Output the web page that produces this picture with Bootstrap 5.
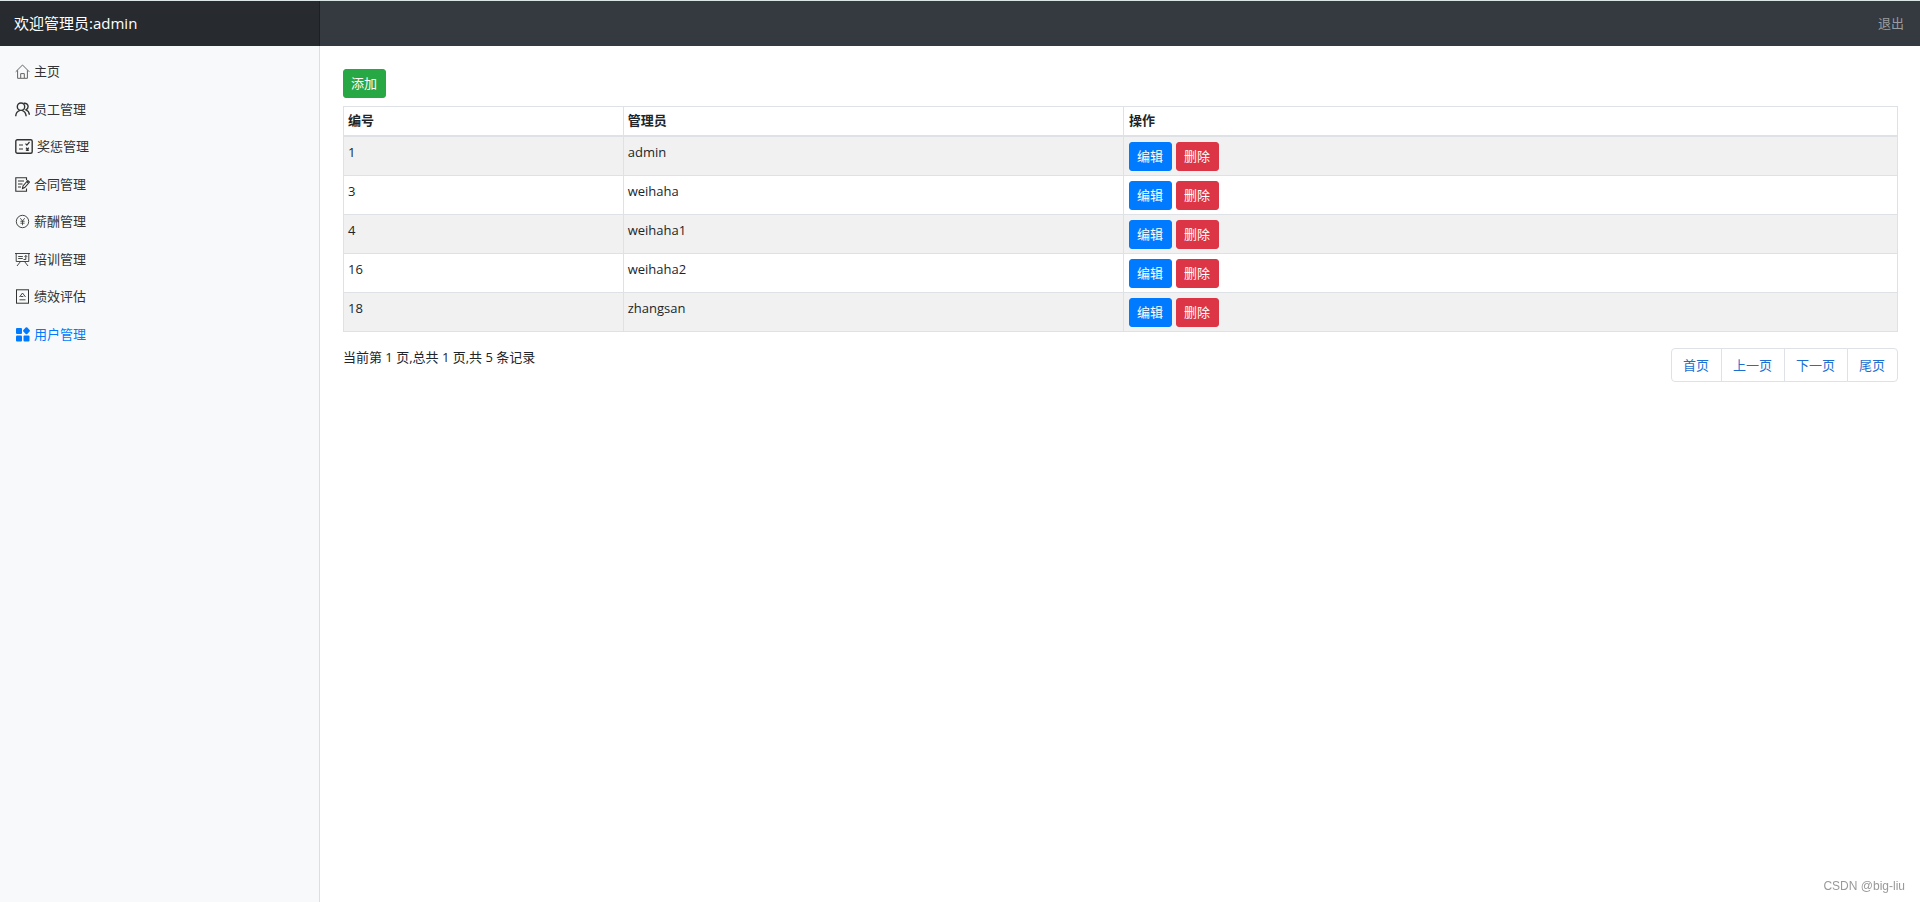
<!DOCTYPE html>
<html lang="zh-CN">
<head>
<meta charset="utf-8">
<meta name="viewport" content="width=device-width, initial-scale=1">
<title>用户管理</title>
<link href="https://cdn.jsdelivr.net/npm/bootstrap@5.3.0/dist/css/bootstrap.min.css" rel="stylesheet">
<style>
body{font-family:"Open Sans","Noto Sans CJK SC",sans-serif;font-size:13px;line-height:1.5;color:#212529;background:#fff}
.topbar{background:#343a40;border-top:1px solid #dce5e6;height:46px}
.brand{background:#272a2e;color:#fff;font-size:15px;padding:0 14px;box-shadow:inset -1px 0 0 rgba(0,0,0,.25)}
.brand:hover{color:#fff}
.logout{color:#9a9da0;padding:0 16px}
.sidebar{background:#f8f9fa;border-right:1px solid #dcdee0;padding-top:7px}
.sidebar .nav-link{display:flex;align-items:center;gap:4px;padding:9px 15px;color:#333}
.sidebar .nav-link.active{color:#007bff}
.sidebar svg{width:15px;height:15px;fill:none;stroke:currentColor}
.sidebar svg.wide{width:18px}
.content{padding:23px 22px 24px 23px}
.btn{--bs-btn-font-size:13px;--bs-btn-border-radius:3px;line-height:21px;padding:3px 8px 3px 7px}
.btn-success{--bs-btn-bg:#28a745;--bs-btn-border-color:#28a745}
.btn-primary{--bs-btn-bg:#007bff;--bs-btn-border-color:#007bff}
.btn-danger{--bs-btn-bg:#dc3545;--bs-btn-border-color:#dc3545}
.admins{--bs-table-striped-bg:#f1f1f1;border-color:#dee2e6;line-height:20px}
.admins>:not(caption)>*>*{padding:4px}
.admins>tbody>tr>td{padding-top:5px}
.admins>thead>tr>th{border-bottom-width:2px;padding:3px 4px 5px}
.admins th:last-child,.admins td:last-child{padding-left:5px}
.pagination{--bs-pagination-font-size:13px;--bs-pagination-color:#1a6fd0;--bs-pagination-border-radius:4px;line-height:20px}
.pagination .page-link{padding:6px 12px 6px 11px}
.watermark{right:15px;bottom:7px;color:#999;font:12px/18px "Liberation Sans",sans-serif}
</style>
</head>
<body class="d-flex flex-column min-vh-100">
<header class="topbar d-flex">
  <a class="brand col-2 d-flex align-items-center text-decoration-none" href="#">欢迎管理员:admin</a>
  <a class="logout ms-auto d-flex align-items-center text-decoration-none" href="#">退出</a>
</header>
<div class="d-flex flex-grow-1">
  <nav class="sidebar col-2">
    <ul class="nav flex-column">
      <li><a class="nav-link" href="#"><svg viewBox="0 0 15 15" opacity=".75"><path d="M.7 7.8 7.500 1l6.800 6.800M2.600 6.300v8h9.800v-8M5.700 14V9.600h3.600V14"/></svg>主页</a></li>
      <li><a class="nav-link" href="#"><svg viewBox="0 0 15 15" stroke-width="1.400"><circle cx="6" cy="4.700" r="3.700"/><path d="M.7 14.300C.9 11 2.700 9.100 5 8.400M7 8.400c2.500.8 3.900 2.900 4.200 5.900M8.700 1.300c2.300-.5 4.400 1 4.400 3.200 0 1.500-.8 2.700-2.100 3.300 2 .8 3.200 2.500 3.400 4.900"/></svg>员工管理</a></li>
      <li><a class="nav-link" href="#"><svg class="wide" viewBox="0 0 18 15" stroke-width="1.400"><rect x=".8" y=".8" width="16.400" height="13.400" rx="1.500"/><path d="M4 6h4M4 10h4M10.500 4.700l1.400 1.500 2.600-3.200M11 8.800l2.800 2.700M13.800 8.800 11 11.500" stroke-width="1.200"/></svg>奖惩管理</a></li>
      <li><a class="nav-link" href="#"><svg viewBox="0 0 15 15" stroke-width="1.100"><path d="M11.500 3.200V.8H.8v13.400h10.700v-2.700M3 4h6M3 7h4.500M3 10h3"/><path d="m7.500 11.500.5-2.600 4.800-5.400 1.700 1.500-4.800 5.500zM11.700 4.700l1.700 1.500"/></svg>合同管理</a></li>
      <li><a class="nav-link" href="#"><svg viewBox="0 0 15 15" stroke-width=".9"><circle cx="7.500" cy="7.500" r="6.200"/><path d="M5.300 4.200 7.500 7l2.200-2.800M7.500 7v4.200M5.400 7.300h4.200M5.400 9.200h4.200" stroke-width=".8"/></svg>薪酬管理</a></li>
      <li><a class="nav-link" href="#"><svg viewBox="0 0 15 15" stroke-width=".9"><path d="M0 1.500h15M1.200 1.500v8h12.600v-8M3.200 4.500h4.600M3.200 6.500h4.600M8.500 7.500h2.300V3.500M9.500 4.800l1.300-1.300 1.300 1.300M5.500 9.500 2 14M9.500 9.500 13 14"/></svg>培训管理</a></li>
      <li><a class="nav-link" href="#"><svg viewBox="0 0 15 15"><rect x="1.500" y=".8" width="12" height="13.400"/><path d="m4.500 8 3-4 3 4M5.500 7.500h2.800M4.500 10.800h6" stroke-width=".9"/></svg>绩效评估</a></li>
      <li><a class="nav-link active" aria-current="page" href="#"><svg viewBox="0 0 15 15"><g fill="currentColor" stroke="none"><rect x="1" y="1" width="6" height="6" rx="1"/><rect x="1" y="8.500" width="6" height="6" rx="1"/><rect x="8.500" y="8.500" width="6" height="6" rx="1"/><path d="M10.700.6q.8-.7 1.600 0l2.300 2.400q.7.800 0 1.600l-2.300 2.400q-.8.700-1.600 0L8.400 4.600q-.7-.8 0-1.600z"/></g></svg>用户管理</a></li>
    </ul>
  </nav>
  <main class="content flex-grow-1">
    <button type="button" class="btn btn-success mb-2 d-block">添加</button>
    <table class="table table-bordered table-striped admins mb-3">
      <colgroup><col style="width:18%"><col style="width:32.2%"><col></colgroup>
      <thead><tr><th scope="col">编号</th><th scope="col">管理员</th><th scope="col">操作</th></tr></thead>
      <tbody>
        <tr><td>1</td><td>admin</td><td><div class="d-flex gap-1"><button type="button" class="btn btn-primary">编辑</button><button type="button" class="btn btn-danger">删除</button></div></td></tr>
        <tr><td>3</td><td>weihaha</td><td><div class="d-flex gap-1"><button type="button" class="btn btn-primary">编辑</button><button type="button" class="btn btn-danger">删除</button></div></td></tr>
        <tr><td>4</td><td>weihaha1</td><td><div class="d-flex gap-1"><button type="button" class="btn btn-primary">编辑</button><button type="button" class="btn btn-danger">删除</button></div></td></tr>
        <tr><td>16</td><td>weihaha2</td><td><div class="d-flex gap-1"><button type="button" class="btn btn-primary">编辑</button><button type="button" class="btn btn-danger">删除</button></div></td></tr>
        <tr><td>18</td><td>zhangsan</td><td><div class="d-flex gap-1"><button type="button" class="btn btn-primary">编辑</button><button type="button" class="btn btn-danger">删除</button></div></td></tr>
      </tbody>
    </table>
    <div class="d-flex justify-content-between align-items-start">
      <span>当前第 1 页,总共 1 页,共 5 条记录</span>
      <ul class="pagination mb-0">
        <li class="page-item"><a class="page-link" href="#">首页</a></li>
        <li class="page-item"><a class="page-link" href="#">上一页</a></li>
        <li class="page-item"><a class="page-link" href="#">下一页</a></li>
        <li class="page-item"><a class="page-link" href="#">尾页</a></li>
      </ul>
    </div>
  </main>
</div>
<div class="watermark position-fixed">CSDN @big-liu</div>
<script src="https://cdn.jsdelivr.net/npm/bootstrap@5.3.0/dist/js/bootstrap.bundle.min.js"></script>
</body>
</html>
